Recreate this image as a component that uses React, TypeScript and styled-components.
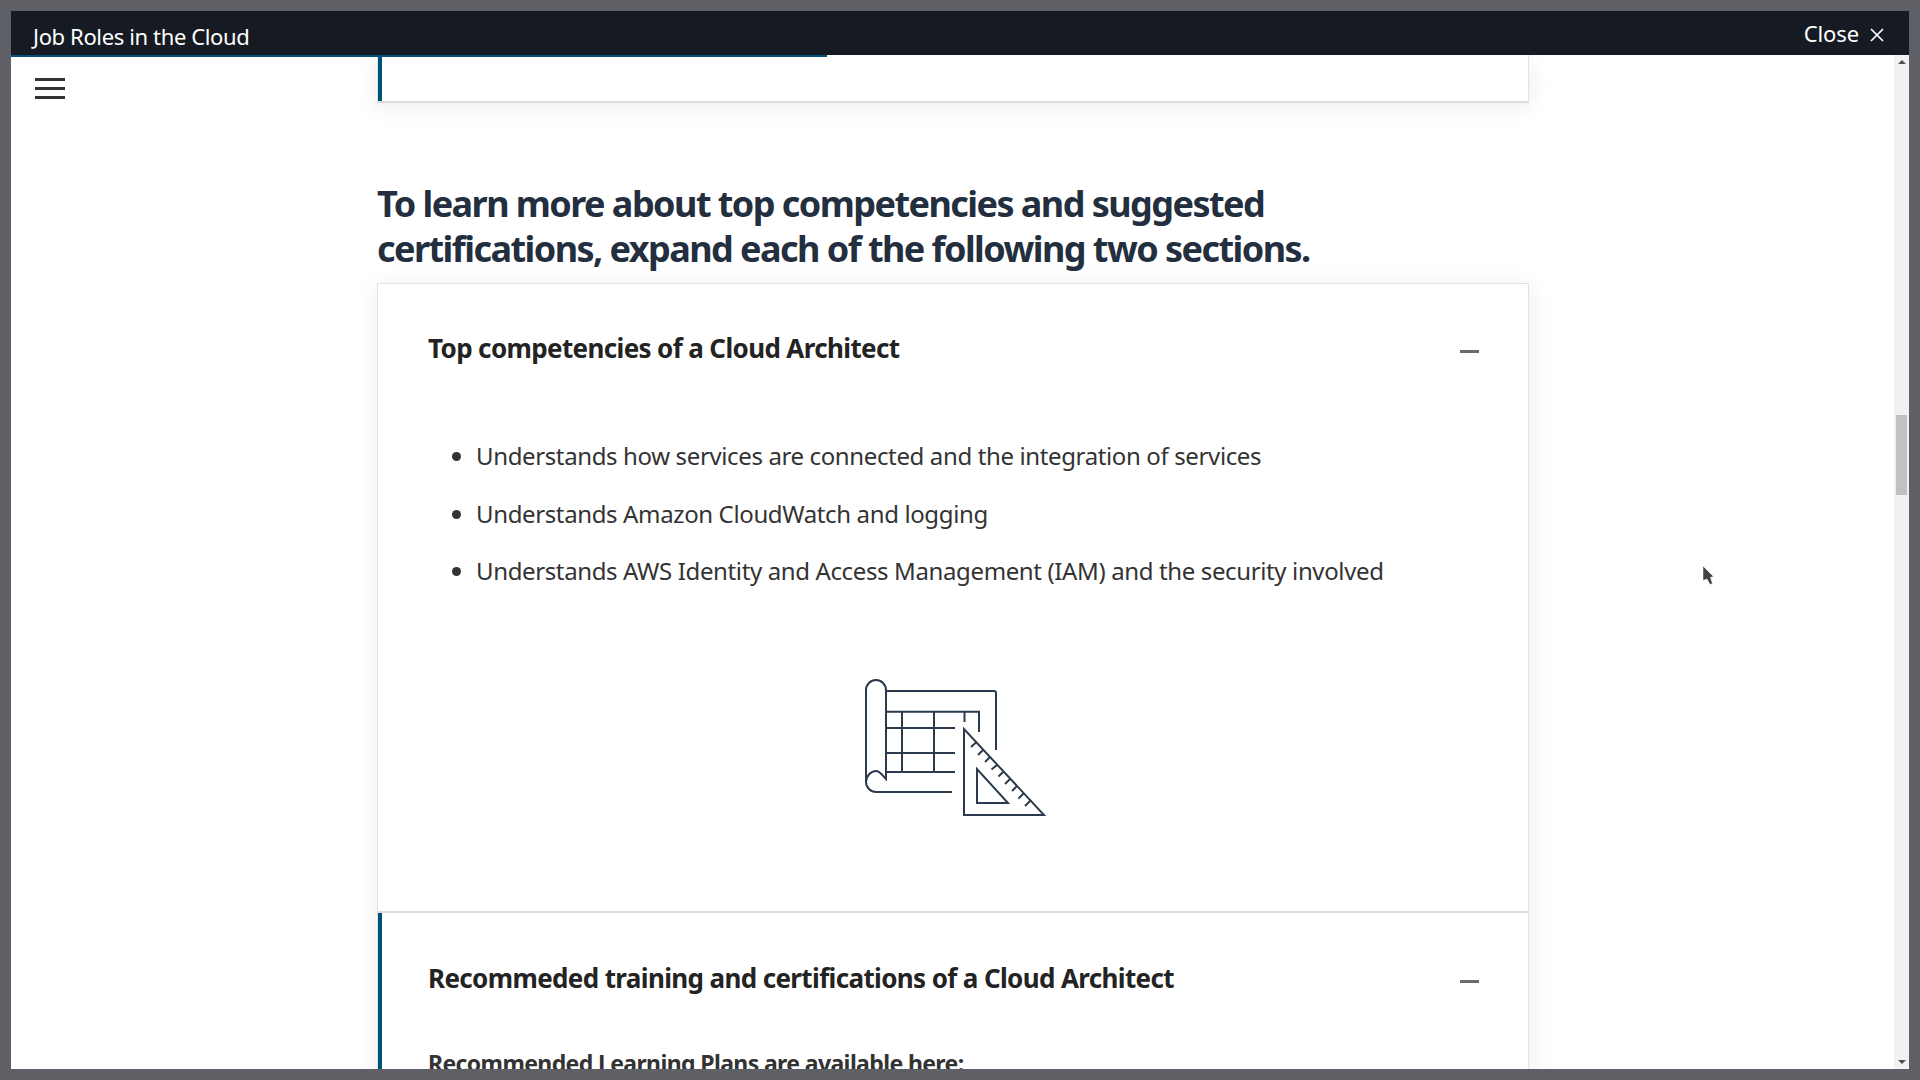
import React from "react";
import styled, { createGlobalStyle } from "styled-components";

const Global = createGlobalStyle`
  html, body { margin: 0; padding: 0; height: 100%; background: #5f6066; }
  #root { height: 100%; }
  * { box-sizing: border-box; }
`;

const Overlay = styled.div`
  width: 1920px;
  height: 1080px;
  padding: 11px;
  background: #5f6066;
  font-family: "Noto Sans", "Open Sans", sans-serif;
  overflow: hidden;
`;
const Win = styled.div`
  height: 1058px;
  width: 1898px;
  display: flex;
  flex-direction: column;
  background: #fff;
  position: relative;
`;
const Header = styled.header`
  height: 44px;
  flex: none;
  background: #161a22;
  color: #fff;
  display: flex;
  align-items: center;
  justify-content: space-between;
  padding: 0 25px 0 22px;
  font-size: 22px;
`;
const Title = styled.div`
  padding-top: 6px;
  letter-spacing: -0.37px;
`;
const Close = styled.div`
  display: flex;
  align-items: center;
  gap: 11px;
  letter-spacing: -0.1px;
`;
const CloseSvg = styled.svg`
  margin-top: 4px;
`;
const Body = styled.div`
  flex: 1;
  display: flex;
  min-height: 0;
  position: relative;
`;
const Progress = styled.div`
  position: absolute;
  left: 0;
  top: 0;
  height: 2px;
  background: #005276;
  z-index: 3;
`;
const Burger = styled.button`
  position: absolute;
  left: 24px;
  top: 23px;
  width: 30px;
  height: 21px;
  padding: 0;
  border: 0;
  background: none;
  display: flex;
  flex-direction: column;
  justify-content: space-between;
  z-index: 2;
`;
const BurgerLine = styled.span`
  display: block;
  height: 3px;
  background: #333;
`;
const Pointer = styled.svg`
  position: absolute;
  left: 1691px;
  top: 510px;
  z-index: 4;
`;
const Scroller = styled.main`
  flex: 1;
  min-width: 0;
  overflow: hidden;
  padding-left: 366px;
`;
const Column = styled.div`
  width: 1152px;
`;
const TopCard = styled.div`
  height: 48px;
  background: #fff;
  border: 1px solid #e2e2e2;
  border-top: 0;
  border-bottom: 2px solid #dcdcdc;
  box-shadow: 0 4px 24px rgba(0, 0, 0, 0.08);
`;
const TopAccent = styled.div`
  width: 4px;
  height: 100%;
  background: #005276;
`;
const Heading = styled.h2`
  margin: 78px 0 0;
  height: 102px;
  font-size: 36px;
  line-height: 45px;
  font-weight: 700;
  letter-spacing: -1.55px;
  color: #232f3e;
  width: 1000px;
`;
const Card = styled.section`
  background: #fff;
  border: 1px solid #e2e2e2;
  border-bottom: 0;
  box-shadow: 0 4px 24px rgba(0, 0, 0, 0.08);
`;
const Panel = styled.div<{ $accent?: boolean }>`
  padding: 0 49px 0 ${(p) => (p.$accent ? 46 : 50)}px;
  border-left: ${(p) => (p.$accent ? "4px solid #005276" : "0")};
`;
const PanelHead = styled.div<{ $tall?: boolean }>`
  display: flex;
  align-items: center;
  justify-content: space-between;
  height: ${(p) => (p.$tall ? 130 : 127)}px;
`;
const PanelTitle = styled.h3`
  margin: 0;
  font-size: 26px;
  font-weight: 700;
  letter-spacing: -0.63px;
  color: #232323;
`;
const Minus = styled.span`
  display: block;
  width: 19px;
  height: 3px;
  margin: 8px 0 0;
  background: #6b6b6b;
`;
const List = styled.ul`
  margin: 28px 0 0;
  padding: 0 0 0 48px;
  color: #333;
  font-size: 24px;
  line-height: 34px;
  letter-spacing: -0.37px;
`;
const Item = styled.li`
  margin-bottom: 23.5px;
`;
const Figure = styled.div`
  display: flex;
  justify-content: center;
  padding: 66px 0 93px;
`;
const Divider = styled.div`
  height: 2px;
  background: #dcdcdc;
`;
const SubHead = styled.div`
  font-size: 23px;
  font-weight: 700;
  color: #333;
  line-height: 32px;
  letter-spacing: -0.62px;
  margin-top: 4px;
  padding-bottom: 60px;
`;
const ScrollTrack = styled.div`
  width: 15px;
  flex: none;
  background: #f1f1f1;
  display: flex;
  flex-direction: column;
  align-items: center;
  justify-content: space-between;
  position: relative;
  padding: 5px 0;
`;
const ScrollThumb = styled.div`
  position: absolute;
  left: 2px;
  top: 360px;
  width: 11px;
  height: 80px;
  background: #c1c1c1;
`;
const ArrowUp = styled.span`
  width: 0;
  height: 0;
  border-left: 4px solid transparent;
  border-right: 4px solid transparent;
  border-bottom: 4px solid #505050;
`;
const ArrowDown = styled.span`
  width: 0;
  height: 0;
  border-left: 4px solid transparent;
  border-right: 4px solid transparent;
  border-top: 4px solid #505050;
`;

const ticks: [number, number, number, number][] = [
  [131, 87, 136, 82.5],
  [138, 95, 143, 90],
  [145, 102, 150, 97],
  [151.5, 109.5, 157, 105],
  [158.5, 116.5, 163.5, 111.5],
  [165, 124, 170, 119],
  [172, 131, 177, 126],
  [178.5, 138.5, 183.5, 133.5],
  [185, 146, 191, 140],
];

const Blueprint = () => (
  <svg width="184" height="140" viewBox="22 18 184 140" fill="none" stroke="#2b3a4c" strokeWidth="2">
    <path d="M26 122V30a10 10 0 0 1 20 0v89c-3-3-6-8-10-8-5 0-10 5-10 11a10 10 0 0 0 10 10h76" />
    <path d="M46 31h108a2 2 0 0 1 2 2v57" />
    <path d="M46 51.7h93V72" />
    <path d="M46 68h69M46 93h69M46 112h69M62 52v60M94 52v60M124.500 52v10" />
    <path d="M124 69v86h80z" />
    <path d="M137 109v34h31z" />
    {ticks.map(([a, b, c, d]) => (
      <line key={a} x1={a} y1={b} x2={c} y2={d} />
    ))}
  </svg>
);

const CloseIcon = () => (
  <CloseSvg width="14" height="14" viewBox="0 0 14 14" stroke="#fff" strokeWidth="1.7" fill="none">
    <path d="M1 1l12 12M13 1L1 13" />
  </CloseSvg>
);

export default function App() {
  return (
    <Overlay>
      <Global />
      <Win>
        <Header>
          <Title>Job Roles in the Cloud</Title>
          <Close>
            Close <CloseIcon />
          </Close>
        </Header>
        <Body>
          <Progress style={{ width: 816 }} />
          <Burger aria-label="menu">
            <BurgerLine />
            <BurgerLine />
            <BurgerLine />
          </Burger>
          <Scroller>
            <Column>
              <TopCard>
                <TopAccent />
              </TopCard>
              <Heading>
                To learn more about top competencies and suggested certifications, expand each of the following two
                sections.
              </Heading>
              <Card>
                <Panel>
                  <PanelHead>
                    <PanelTitle>Top competencies of a Cloud Architect</PanelTitle>
                    <Minus />
                  </PanelHead>
                  <List>
                    <Item>Understands how services are connected and the integration of services</Item>
                    <Item>Understands Amazon CloudWatch and logging</Item>
                    <Item>Understands AWS Identity and Access Management (IAM) and the security involved</Item>
                  </List>
                  <Figure>
                    <Blueprint />
                  </Figure>
                </Panel>
                <Divider />
                <Panel $accent>
                  <PanelHead $tall>
                    <PanelTitle>Recommeded training and certifications of a Cloud Architect</PanelTitle>
                    <Minus />
                  </PanelHead>
                  <SubHead>Recommended Learning Plans are available here:</SubHead>
                </Panel>
              </Card>
            </Column>
          </Scroller>
          <ScrollTrack>
            <ArrowUp />
            <ScrollThumb />
            <ArrowDown />
          </ScrollTrack>
          <Pointer width="13" height="21" viewBox="0 0 13 21">
            <path d="M1 1l10.500 10.500-3 1 2 6-2.500 1-3-5.500-4 1.500z" fill="#444" stroke="#fff" strokeWidth="0.5" />
          </Pointer>
        </Body>
      </Win>
    </Overlay>
  );
}
